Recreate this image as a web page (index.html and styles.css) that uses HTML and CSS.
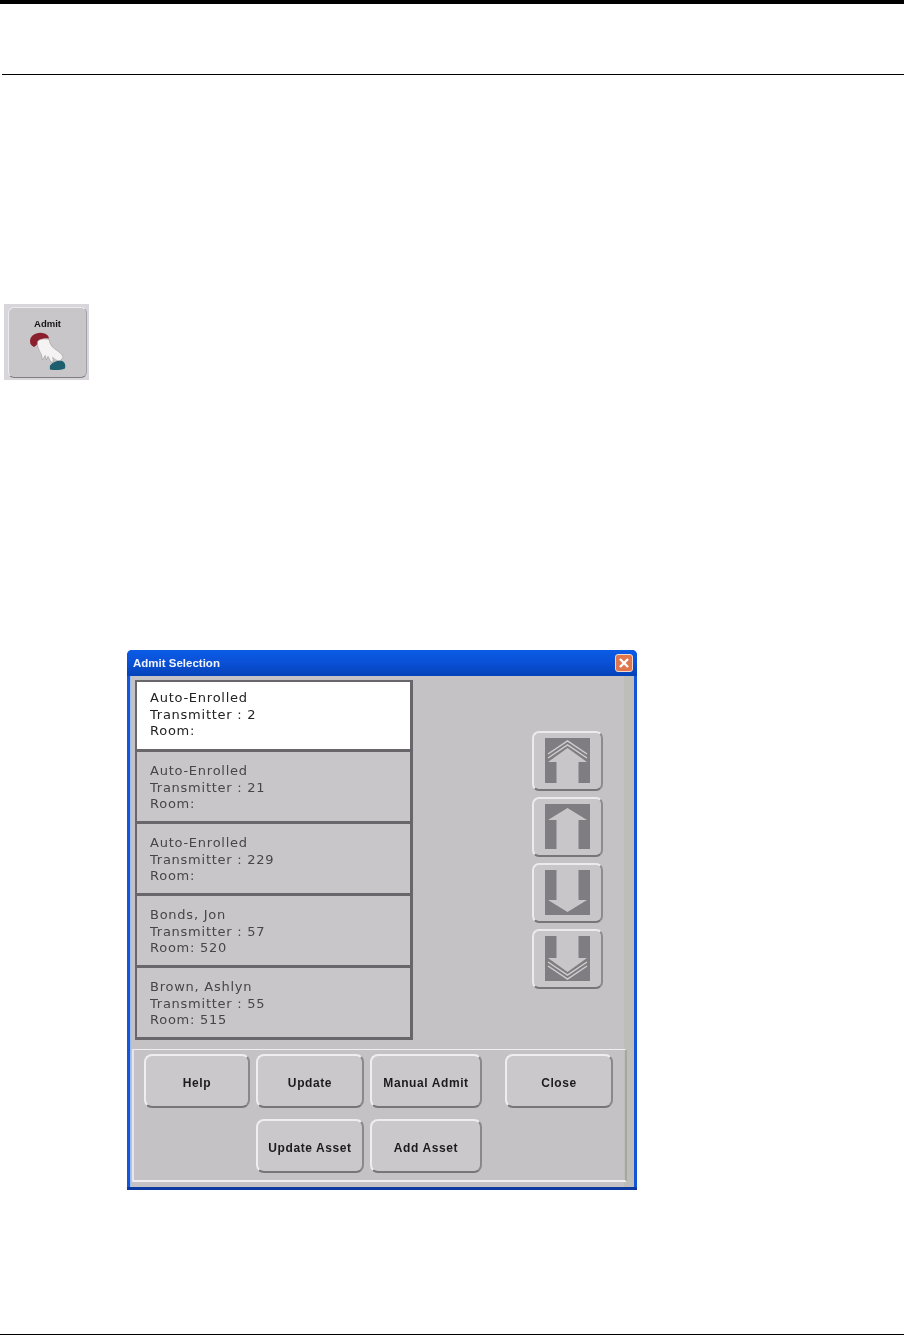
FILE: index.html
```html
<!DOCTYPE html>
<html lang="en">
<head>
    <meta charset="UTF-8">
    <title>Admit Selection</title>
    <link rel="stylesheet" href="styles.css">
</head>
<body>
    <div class="top-bar"></div>
    <div class="header-rule"></div>

    <div class="admit-tile">
        <div class="admit-btn">
            <span class="admit-label">Admit</span>
            <svg class="admit-icon" width="50" height="50" viewBox="0 0 50 50">
                <path d="M6 13 C5 7 11 3 17 3 C22 3 26 6 26 9 C21 8 17 10 15 13 C13 16 12 17 10 18 C8 17 6 15 6 13Z" fill="#8a1f2e"/>
                <path d="M14 12 C17 9 22 9 26 10 C27 14 28 17 32 20 C36 23 40 25 41 29 L38 33 C34 33 32 31 30 29 L31 34 L28 34 L25 28 L23 32 L22 27 L19 32 L18 26 C15 21 13 16 14 12Z" fill="#f4f2f2" stroke="#9a9698" stroke-width=".6"/>
                <path d="M27 38 C30 34 36 32 40 33 C43 34 44 38 43 41 C38 43 32 43 27 42Z" fill="#1d5f6e"/>
            </svg>
        </div>
    </div>

    <div class="window">
        <div class="title-bar">
            <span class="title-text">Admit Selection</span>
            <span class="close-x">
                <svg width="12" height="12" viewBox="0 0 12 12">
                    <path d="M2 2 L10 10 M10 2 L2 10" stroke="#fff" stroke-width="2.4"/>
                </svg>
            </span>
        </div>
        <div class="client">
            <div class="middle">
                <div class="list">
                    <div class="list-item selected">Auto-Enrolled<br>Transmitter : 2<br>Room:</div>
                    <div class="list-item">Auto-Enrolled<br>Transmitter : 21<br>Room:</div>
                    <div class="list-item">Auto-Enrolled<br>Transmitter : 229<br>Room:</div>
                    <div class="list-item">Bonds, Jon<br>Transmitter : 57<br>Room: 520</div>
                    <div class="list-item">Brown, Ashlyn<br>Transmitter : 55<br>Room: 515</div>
                </div>
                <div class="arrows">
                    <div class="arrow-btn">
                        <svg width="45" height="45" viewBox="0 0 45 45">
                            <rect width="45" height="45" fill="#807d82"/>
                            <path d="M11.5 45 V24 H3 L22.5 10 L42 24 H33.5 V45Z" fill="#c9c6ca"/>
                            <path d="M3 20 L22.5 7 L42 20 M3 16 L22.5 3 L42 16" fill="none" stroke="#cfcccf" stroke-width="1.5"/>
                        </svg>
                    </div>
                    <div class="arrow-btn">
                        <svg width="45" height="45" viewBox="0 0 45 45">
                            <rect width="45" height="45" fill="#807d82"/>
                            <path d="M11.5 45 V16 H3 L22.5 4 L42 16 H33.5 V45Z" fill="#c9c6ca"/>
                        </svg>
                    </div>
                    <div class="arrow-btn">
                        <svg width="45" height="45" viewBox="0 0 45 45">
                            <rect width="45" height="45" fill="#807d82"/>
                            <path d="M11.5 0 V30 H3 L22.5 42 L42 30 H33.5 V0Z" fill="#c9c6ca"/>
                        </svg>
                    </div>
                    <div class="arrow-btn">
                        <svg width="45" height="45" viewBox="0 0 45 45">
                            <rect width="45" height="45" fill="#807d82"/>
                            <path d="M11.5 0 V22 H3 L22.5 36 L42 22 H33.5 V0Z" fill="#c9c6ca"/>
                            <path d="M3 26 L22.5 39 L42 26 M3 30 L22.5 43 L42 30" fill="none" stroke="#cfcccf" stroke-width="1.5"/>
                        </svg>
                    </div>
                </div>
            </div>
            <div class="panel">
                <button class="push-btn">Help</button>
                <button class="push-btn">Update</button>
                <button class="push-btn">Manual Admit</button>
                <button class="push-btn close-btn">Close</button>
                <button class="push-btn second">Update Asset</button>
                <button class="push-btn">Add Asset</button>
            </div>
        </div>
    </div>

    <div class="footer-rule"></div>
</body>
</html>
```

FILE: styles.css
```css
html, body {
    margin: 0;
    padding: 0;
}

body {
    background: white;
    font-family: "Liberation Sans", Arial, sans-serif;
    height: 1335px;
    overflow: hidden;
    display: flex;
    flex-direction: column;
}

.top-bar {
    height: 4px;
    background: black;
}

.header-rule {
    height: 1px;
    margin: 70px 0 0 2px;
    background: black;
}

/* toolbar tile */
.admit-tile {
    width: 85px;
    height: 76px;
    margin: 229px 0 0 4px;
    padding: 3px 2px 2px 4px;
    box-sizing: border-box;
    background: #d8d6da;
}

.admit-btn {
    height: 100%;
    box-sizing: border-box;
    background: #c9c6ca;
    border: 1px solid;
    border-color: #eceaec #a3a1a5 #807e83 #eceaec;
    border-radius: 6px;
    display: flex;
    flex-direction: column;
    align-items: center;
    filter: blur(0.5px);
}

.admit-label {
    margin-top: 10px;
    font-size: 9.5px;
    line-height: 11px;
    font-weight: bold;
    color: #141414;
}

.admit-icon {
    margin-top: 1px;
}

/* dialog */
.window {
    width: 510px;
    height: 540px;
    margin: 270px 0 0 127px;
    box-sizing: border-box;
    display: flex;
    flex-direction: column;
    background: #1556d8;
    border-radius: 5px 5px 0 0;
    border-bottom: 3px solid #0c3aa0;
    filter: blur(0.6px);
}

.title-bar {
    height: 26px;
    padding: 0 4px 0 6px;
    display: flex;
    align-items: center;
    justify-content: space-between;
    background: linear-gradient(#0a5ce6, #0a50d6 50%, #0442b8);
    border-radius: 5px 5px 0 0;
}

.title-text {
    font-size: 11.5px;
    font-weight: bold;
    color: #f2f4ff;
}

.close-x {
    width: 18px;
    height: 18px;
    display: flex;
    align-items: center;
    justify-content: center;
    background: #e0764e;
    border: 1px solid #f0d8cc;
    border-radius: 3px;
    box-sizing: border-box;
}

.client {
    flex: 1;
    margin: 0 3px;
    padding-left: 4px;
    box-sizing: border-box;
    border-left: 1px solid #9dbbec;
    background: linear-gradient(90deg, #c5c2c6 98%, #bdbeb9 98%);
}

.middle {
    display: flex;
    align-items: flex-start;
    padding-top: 4px;
}

.list {
    width: 278px;
    box-sizing: border-box;
    border: solid #68666a;
    border-width: 2px 3px 0 2px;
    background: #c9c6ca;
}

.list-item {
    height: 72px;
    box-sizing: border-box;
    padding: 11px 0 0 13px;
    border-bottom: 3px solid #68666a;
    font-family: "DejaVu Sans", sans-serif;
    font-size: 13px;
    letter-spacing: 0.75px;
    line-height: 16.5px;
    color: #46464a;
}

.list-item.selected {
    background: white;
    height: 70px;
    padding-top: 8px;
    color: #222;
}

.arrows {
    margin: 51px 0 0 119px;
    display: flex;
    flex-direction: column;
    gap: 6px;
}

.arrow-btn {
    width: 71px;
    height: 60px;
    padding-bottom: 2px;
    box-sizing: border-box;
    display: flex;
    align-items: center;
    justify-content: center;
    background: #c9c6ca;
    border: 2px solid;
    border-color: #eceaec #8d8b8f #77757a #eceaec;
    border-radius: 7px;
}

.panel {
    width: 495px;
    height: 133px;
    margin: 9px 0 0 -3px;
    padding: 4px 0 0 10px;
    box-sizing: border-box;
    border-top: 1px solid #f0eef0;
    border-left: 2px solid #e8e6ea;
    border-right: 2px solid #a6a7a0;
    border-bottom: 2px solid #f0eef0;
    display: grid;
    grid-template-columns: 106px 108px 112px 125px;
    grid-auto-rows: 54px;
    column-gap: 6px;
    row-gap: 11px;
}

.push-btn {
    padding: 3px 0 0;
    font-family: "Liberation Sans", Arial, sans-serif;
    font-size: 12px;
    letter-spacing: 0.6px;
    font-weight: bold;
    color: #1c1c1c;
    background: #cbc8cc;
    border: 2px solid;
    border-color: #efedef #8a888c #77757a #efedef;
    border-radius: 8px;
}

.close-btn {
    width: 108px;
    justify-self: end;
}

.second {
    grid-column-start: 2;
}

.footer-rule {
    height: 1px;
    margin-top: 144px;
    background: black;
}
```
